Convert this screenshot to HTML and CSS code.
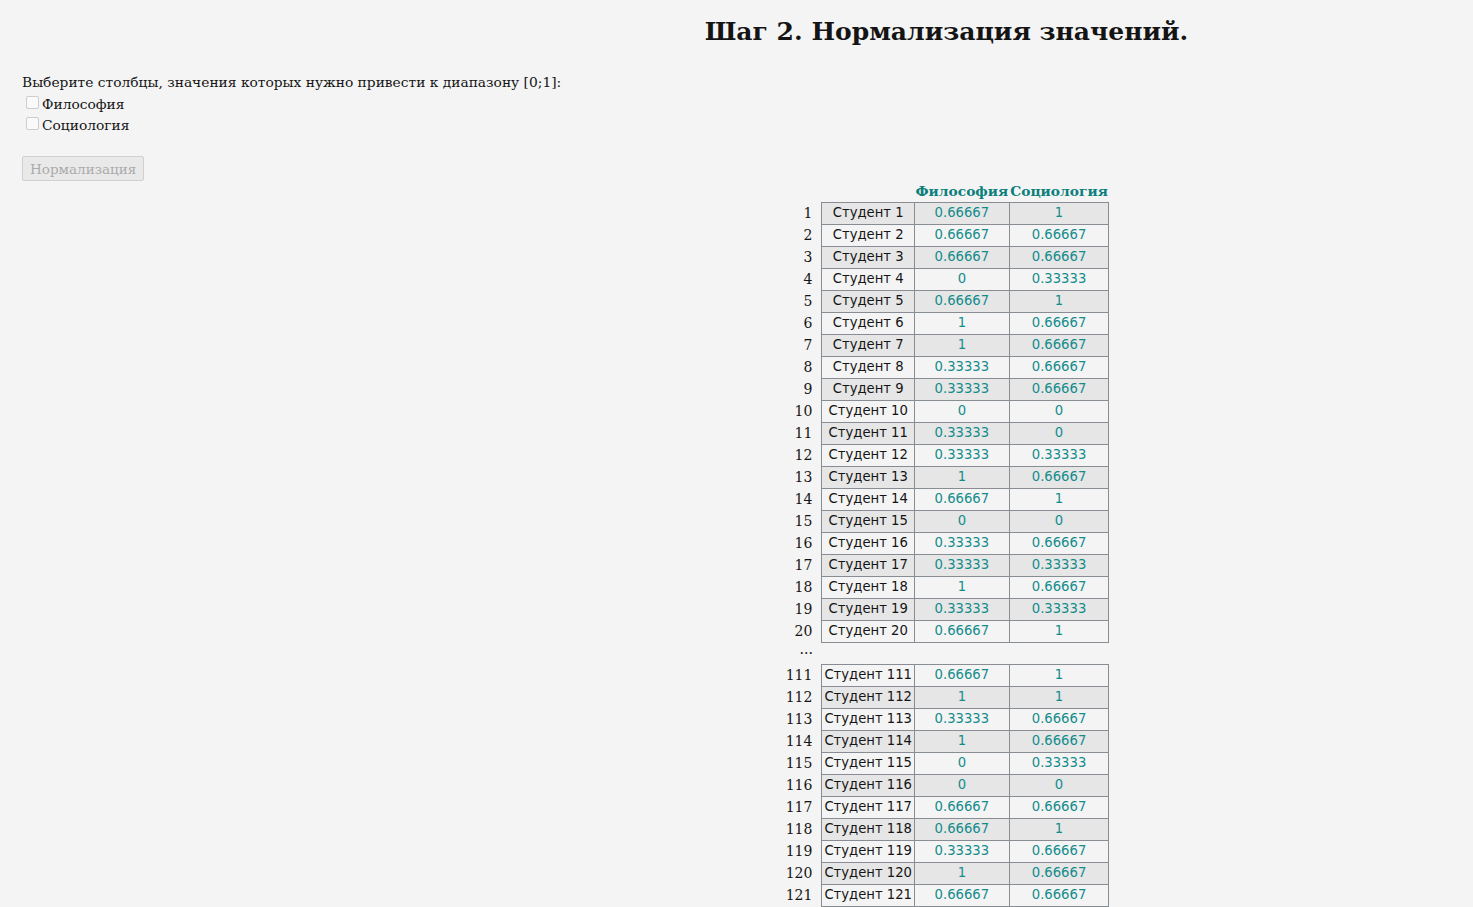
FILE: index.html
```html
<!DOCTYPE html>
<html lang="ru">
<head>
<meta charset="utf-8">
<title>Нормализация</title>
<link rel="stylesheet" href="styles.css">
</head>
<body>
<div class="page">
  <aside class="side">
    <p class="hint">Выберите столбцы, значения которых нужно привести к диапазону [0;1]:</p>
    <label class="opt"><input type="checkbox">Философия</label>
    <label class="opt"><input type="checkbox">Социология</label>
    <button class="btn" disabled>Нормализация</button>
  </aside>
  <main class="main">
    <h1 class="title">Шаг 2. Нормализация значений.</h1>
    <table class="grid">
      <thead>
        <tr><th class="num"></th><th class="hd-empty"></th><th class="hd">Философия</th><th class="hd">Социология</th></tr>
      </thead>
      <tbody>
        <tr><td class="num">1</td><td class="name">Студент 1</td><td class="val">0.66667</td><td class="val">1</td></tr>
        <tr><td class="num">2</td><td class="name">Студент 2</td><td class="val">0.66667</td><td class="val">0.66667</td></tr>
        <tr><td class="num">3</td><td class="name">Студент 3</td><td class="val">0.66667</td><td class="val">0.66667</td></tr>
        <tr><td class="num">4</td><td class="name">Студент 4</td><td class="val">0</td><td class="val">0.33333</td></tr>
        <tr><td class="num">5</td><td class="name">Студент 5</td><td class="val">0.66667</td><td class="val">1</td></tr>
        <tr><td class="num">6</td><td class="name">Студент 6</td><td class="val">1</td><td class="val">0.66667</td></tr>
        <tr><td class="num">7</td><td class="name">Студент 7</td><td class="val">1</td><td class="val">0.66667</td></tr>
        <tr><td class="num">8</td><td class="name">Студент 8</td><td class="val">0.33333</td><td class="val">0.66667</td></tr>
        <tr><td class="num">9</td><td class="name">Студент 9</td><td class="val">0.33333</td><td class="val">0.66667</td></tr>
        <tr><td class="num">10</td><td class="name">Студент 10</td><td class="val">0</td><td class="val">0</td></tr>
        <tr><td class="num">11</td><td class="name">Студент 11</td><td class="val">0.33333</td><td class="val">0</td></tr>
        <tr><td class="num">12</td><td class="name">Студент 12</td><td class="val">0.33333</td><td class="val">0.33333</td></tr>
        <tr><td class="num">13</td><td class="name">Студент 13</td><td class="val">1</td><td class="val">0.66667</td></tr>
        <tr><td class="num">14</td><td class="name">Студент 14</td><td class="val">0.66667</td><td class="val">1</td></tr>
        <tr><td class="num">15</td><td class="name">Студент 15</td><td class="val">0</td><td class="val">0</td></tr>
        <tr><td class="num">16</td><td class="name">Студент 16</td><td class="val">0.33333</td><td class="val">0.66667</td></tr>
        <tr><td class="num">17</td><td class="name">Студент 17</td><td class="val">0.33333</td><td class="val">0.33333</td></tr>
        <tr><td class="num">18</td><td class="name">Студент 18</td><td class="val">1</td><td class="val">0.66667</td></tr>
        <tr><td class="num">19</td><td class="name">Студент 19</td><td class="val">0.33333</td><td class="val">0.33333</td></tr>
        <tr><td class="num">20</td><td class="name">Студент 20</td><td class="val">0.66667</td><td class="val">1</td></tr>
        <tr class="gap"><td class="num">...</td><td></td><td></td><td></td></tr>
        <tr><td class="num">111</td><td class="name">Студент 111</td><td class="val">0.66667</td><td class="val">1</td></tr>
        <tr><td class="num">112</td><td class="name">Студент 112</td><td class="val">1</td><td class="val">1</td></tr>
        <tr><td class="num">113</td><td class="name">Студент 113</td><td class="val">0.33333</td><td class="val">0.66667</td></tr>
        <tr><td class="num">114</td><td class="name">Студент 114</td><td class="val">1</td><td class="val">0.66667</td></tr>
        <tr><td class="num">115</td><td class="name">Студент 115</td><td class="val">0</td><td class="val">0.33333</td></tr>
        <tr><td class="num">116</td><td class="name">Студент 116</td><td class="val">0</td><td class="val">0</td></tr>
        <tr><td class="num">117</td><td class="name">Студент 117</td><td class="val">0.66667</td><td class="val">0.66667</td></tr>
        <tr><td class="num">118</td><td class="name">Студент 118</td><td class="val">0.66667</td><td class="val">1</td></tr>
        <tr><td class="num">119</td><td class="name">Студент 119</td><td class="val">0.33333</td><td class="val">0.66667</td></tr>
        <tr><td class="num">120</td><td class="name">Студент 120</td><td class="val">1</td><td class="val">0.66667</td></tr>
        <tr><td class="num">121</td><td class="name">Студент 121</td><td class="val">0.66667</td><td class="val">0.66667</td></tr>
        <tr><td class="num">122</td><td class="name">Студент 122</td><td class="val">0.33333</td><td class="val">0.33333</td></tr>
        <tr><td class="num">123</td><td class="name">Студент 123</td><td class="val">1</td><td class="val">1</td></tr>
      </tbody>
    </table>
  </main>
</div>
</body>
</html>
```
FILE: styles.css
```css
html, body {
  margin: 0;
  padding: 0;
  background: #f4f4f4;
}
body {
  font-family: "DejaVu Serif", "Liberation Serif", serif;
  color: #141414;
  font-size: 13.8px;
}
.page {
  display: flex;
  align-items: flex-start;
}
.side {
  width: 420px;
  flex: 0 0 420px;
  padding: 73px 0 0 22px;
  box-sizing: border-box;
  white-space: nowrap;
}
.hint {
  margin: 0 0 3px 0;
  line-height: 18px;
}
.opt {
  display: flex;
  align-items: center;
  height: 22px;
  margin-top: -1px;
}
.opt input {
  appearance: none;
  -webkit-appearance: none;
  width: 13px;
  height: 13px;
  margin: 0 3px 0 4px;
  border: 1px solid #cdcdcd;
  border-radius: 2px;
  background: #fafafa;
  box-sizing: border-box;
  position: relative;
  top: -2px;
}
.btn {
  display: block;
  margin-top: 20px;
  font-family: "DejaVu Serif", serif;
  font-size: 13.5px;
  color: #ababab;
  background: #e9e9e9;
  border: 1px solid #d0d0d0;
  border-radius: 2px;
  height: 25px;
  padding: 0 7px;
}
.main {
  flex: 1;
  display: flex;
  flex-direction: column;
  align-items: center;
  height: 907px;
  overflow: hidden;
}
.title {
  font-size: 25px;
  font-weight: bold;
  margin: 14px 0 0 0;
  line-height: 36px;
}
.grid {
  margin-top: 130px;
  border-collapse: collapse;
}
.grid th, .grid td {
  padding: 0 2px;
  height: 22px;
  line-height: 20px;
  box-sizing: border-box;
}
.hd {
  color: #0b7f7c;
  font-weight: bold;
  font-size: 13.8px;
  text-align: center;
  padding: 0 1px !important;
}
.num {
  text-align: right;
  padding-right: 9px !important;
  font-size: 14px;
}
.name, .val {
  border: 1px solid #878d92;
  font-family: "DejaVu Sans", Verdana, sans-serif;
  font-size: 13.2px;
  text-align: center;
}
.val {
  color: #138c8c;
}
.grid tbody tr:nth-child(odd) .name,
.grid tbody tr:nth-child(odd) .val {
  background: #e6e6e6;
}
.grid tbody tr:nth-child(even) .name,
.grid tbody tr:nth-child(even) .val {
  background: #f4f4f4;
}
.gap td {
  border: none;
  background: transparent;
}
.gap .num {
  line-height: 14px;
  vertical-align: top;
}
```
